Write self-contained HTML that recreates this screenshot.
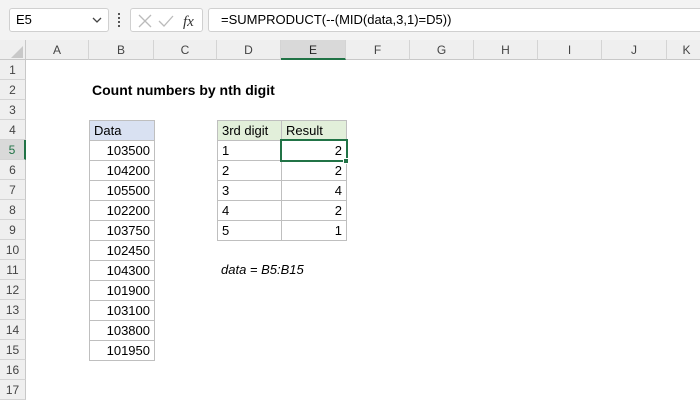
<!DOCTYPE html><html><head><style>
*{margin:0;padding:0;box-sizing:border-box}
body{width:700px;height:400px;overflow:hidden;background:#fff;font-family:"Liberation Sans",Calibri,sans-serif;font-size:13px;color:#000;position:relative}
.a{position:absolute}
.ch{position:absolute;top:40px;height:20px;line-height:20px;text-align:center;color:#444;font-size:12px;border-right:1px solid #d4d4d4;border-bottom:1px solid #c8c8c8;background:#efefef}
.rh{position:absolute;left:0;width:26px;height:20px;line-height:20px;text-align:center;color:#444;font-size:12px;background:#efefef;border-bottom:1px solid #d4d4d4;border-right:1px solid #c8c8c8}
.c{position:absolute;height:21px;line-height:20px;border:1px solid #bfbfbf;padding:0 4px;white-space:nowrap}
.r{text-align:right}
</style></head><body>
<div class="a" style="left:0;top:0;width:700px;height:40px;background:#f3f3f3"></div>
<div class="a" style="left:9px;top:8px;width:100px;height:24px;background:#fff;border:1px solid #d0d0d0;border-radius:3px;line-height:22px;padding-left:6px;font-size:13px">E5</div>
<svg class="a" style="left:92px;top:17px" width="10" height="6"><path d="M1 1L5 5L9 1" stroke="#444" stroke-width="1.3" fill="none"/></svg>
<div class="a" style="left:118px;top:13px;width:2px;height:14px;border-left:2px dotted #555"></div>
<div class="a" style="left:130px;top:8px;width:73px;height:24px;background:#fff;border:1px solid #d0d0d0;border-radius:3px"></div>
<svg class="a" style="left:137px;top:13px" width="60" height="16"><path d="M2 2L14 14M14 2L2 14" stroke="#bbb" stroke-width="1.3" fill="none"/><path d="M22 8L27 13L36 3" stroke="#bbb" stroke-width="1.3" fill="none"/><text x="46" y="13" font-family="Liberation Serif" font-style="italic" font-size="15" fill="#333">fx</text></svg>
<div class="a" style="left:208px;top:8px;width:500px;height:24px;background:#fff;border:1px solid #d0d0d0;border-radius:3px;line-height:22px;padding-left:12px;font-size:13px">=SUMPRODUCT(--(MID(data,3,1)=D5))</div>
<div class="a" style="left:0;top:40px;width:26px;height:20px;background:#efefef;border-right:1px solid #c8c8c8;border-bottom:1px solid #c8c8c8"></div>
<svg class="a" style="left:10px;top:45px" width="14" height="14"><path d="M13 1L13 13L1 13Z" fill="#c8c8c8"/></svg>
<div class="ch" style="left:26px;width:63px">A</div>
<div class="ch" style="left:89px;width:65px">B</div>
<div class="ch" style="left:154px;width:63px">C</div>
<div class="ch" style="left:217px;width:64px">D</div>
<div class="ch" style="left:281px;width:65px;background:#d9d9d9;border-bottom:2px solid #217346;color:#222">E</div>
<div class="ch" style="left:346px;width:64px">F</div>
<div class="ch" style="left:410px;width:64px">G</div>
<div class="ch" style="left:474px;width:64px">H</div>
<div class="ch" style="left:538px;width:64px">I</div>
<div class="ch" style="left:602px;width:65px">J</div>
<div class="ch" style="left:667px;width:40px">K</div>
<div class="rh" style="top:60px">1</div><div class="rh" style="top:80px">2</div><div class="rh" style="top:100px">3</div><div class="rh" style="top:120px">4</div>
<div class="rh" style="top:140px;background:#d9d9d9;border-right:2px solid #217346;color:#217346">5</div>
<div class="rh" style="top:160px">6</div><div class="rh" style="top:180px">7</div><div class="rh" style="top:200px">8</div><div class="rh" style="top:220px">9</div><div class="rh" style="top:240px">10</div><div class="rh" style="top:260px">11</div><div class="rh" style="top:280px">12</div><div class="rh" style="top:300px">13</div><div class="rh" style="top:320px">14</div><div class="rh" style="top:340px">15</div><div class="rh" style="top:360px">16</div><div class="rh" style="top:380px">17</div>
<div class="a" style="left:92px;top:80px;height:20px;line-height:20px;font-weight:bold;font-size:14px">Count numbers by nth digit</div>
<div class="c" style="left:89px;top:120px;width:66px;background:#d9e1f2">Data</div>
<div class="c r" style="left:89px;top:140px;width:66px">103500</div>
<div class="c r" style="left:89px;top:160px;width:66px">104200</div>
<div class="c r" style="left:89px;top:180px;width:66px">105500</div>
<div class="c r" style="left:89px;top:200px;width:66px">102200</div>
<div class="c r" style="left:89px;top:220px;width:66px">103750</div>
<div class="c r" style="left:89px;top:240px;width:66px">102450</div>
<div class="c r" style="left:89px;top:260px;width:66px">104300</div>
<div class="c r" style="left:89px;top:280px;width:66px">101900</div>
<div class="c r" style="left:89px;top:300px;width:66px">103100</div>
<div class="c r" style="left:89px;top:320px;width:66px">103800</div>
<div class="c r" style="left:89px;top:340px;width:66px">101950</div>
<div class="c" style="left:217px;top:120px;width:65px;background:#e2efda">3rd digit</div>
<div class="c" style="left:281px;top:120px;width:66px;background:#e2efda">Result</div>
<div class="c" style="left:217px;top:140px;width:65px">1</div><div class="c r" style="left:281px;top:140px;width:66px">2</div>
<div class="c" style="left:217px;top:160px;width:65px">2</div><div class="c r" style="left:281px;top:160px;width:66px">2</div>
<div class="c" style="left:217px;top:180px;width:65px">3</div><div class="c r" style="left:281px;top:180px;width:66px">4</div>
<div class="c" style="left:217px;top:200px;width:65px">4</div><div class="c r" style="left:281px;top:200px;width:66px">2</div>
<div class="c" style="left:217px;top:220px;width:65px">5</div><div class="c r" style="left:281px;top:220px;width:66px">1</div>
<div class="a" style="left:280px;top:139px;width:68px;height:23px;border:2px solid #217346"></div>
<div class="a" style="left:343px;top:158px;width:6px;height:6px;background:#217346;border:1px solid #fff"></div>
<div class="a" style="left:221px;top:260px;line-height:20px;font-style:italic">data = B5:B15</div>
</body></html>
